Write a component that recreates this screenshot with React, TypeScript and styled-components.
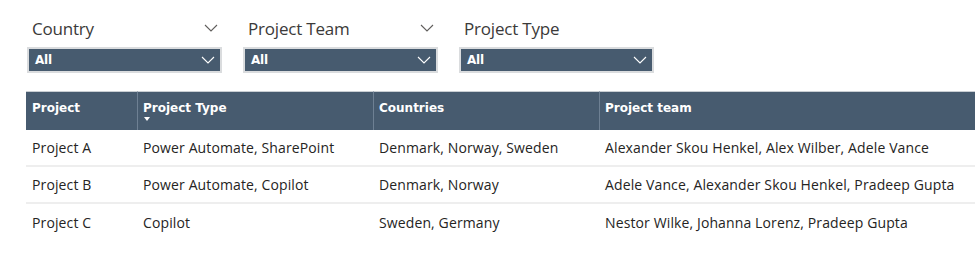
import React from "react";
import styled, { createGlobalStyle } from "styled-components";

const GlobalStyle = createGlobalStyle`
  html, body {
    margin: 0;
    padding: 0;
    background: #ffffff;
  }
  body {
    font-family: "Segoe UI", "Open Sans", "Noto Sans", sans-serif;
    overflow: hidden;
  }
`;

const slate = "#475b6f";

type Row = { project: string; type: string; countries: string; team: string };

const rows: Row[] = [
  {
    project: "Project A",
    type: "Power Automate, SharePoint",
    countries: "Denmark, Norway, Sweden",
    team: "Alexander Skou Henkel, Alex Wilber, Adele Vance",
  },
  {
    project: "Project B",
    type: "Power Automate, Copilot",
    countries: "Denmark, Norway",
    team: "Adele Vance, Alexander Skou Henkel, Pradeep Gupta",
  },
  {
    project: "Project C",
    type: "Copilot",
    countries: "Sweden, Germany",
    team: "Nestor Wilke, Johanna Lorenz, Pradeep Gupta",
  },
];

const Page = styled.div`
  width: 975px;
  height: 259px;
  overflow: hidden;
`;

const SlicerBar = styled.div`
  display: flex;
  gap: 21px;
  padding: 13px 0 0 27px;
`;

const Slicer = styled.div`
  width: 195px;
  display: flex;
  flex-direction: column;
`;

const SlicerHead = styled.div`
  height: 30px;
  display: flex;
  align-items: center;
  justify-content: space-between;
  padding: 0 4px 0 5px;
`;

const SlicerLabel = styled.span`
  font-size: 17px;
  color: #3b3a39;
  font-family: "Segoe UI", "Open Sans", sans-serif;
  letter-spacing: -0.2px;
`;

const DropBox = styled.div`
  margin-top: 4px;
  height: 26px;
  box-sizing: border-box;
  border: 2px solid #dadcde;
  background: ${slate};
  display: flex;
  align-items: center;
  justify-content: space-between;
  padding: 0 5px 0 6px;
`;

const DropValue = styled.span`
  color: #ffffff;
  font-family: "DejaVu Sans", sans-serif;
  font-weight: bold;
  font-size: 12px;
  letter-spacing: -0.2px;
`;

const Chevron = ({ color }: { color: string }) => (
  <svg width="14" height="8" viewBox="0 0 14 8" aria-hidden>
    <path d="M1 1 L7 7 L13 1" fill="none" stroke={color} strokeWidth="1.1" />
  </svg>
);

const Table = styled.div`
  margin: 18px 0 0 26px;
  display: grid;
  grid-template-columns: 111px 236px 226px 1fr;
`;

const HeadCell = styled.div<{ $first?: boolean }>`
  height: 39px;
  box-sizing: border-box;
  background: ${slate};
  border-top: 1px solid #c9ced3;
  border-left: ${({ $first }) => ($first ? "none" : "1px solid #6e8093")};
  padding: 9px 6px 0 ${({ $first }) => ($first ? "6px" : "5px")};
  color: #ffffff;
  font-family: "DejaVu Sans", sans-serif;
  font-weight: bold;
  font-size: 12px;
  letter-spacing: 0;
  line-height: 15px;
`;

const SortMark = styled.div`
  width: 0;
  height: 0;
  margin: 1px 0 0 1px;
  border-left: 3.5px solid transparent;
  border-right: 3.5px solid transparent;
  border-top: 4px solid #ffffff;
`;

const Cell = styled.div<{ $last?: boolean }>`
  height: 37px;
  box-sizing: border-box;
  display: flex;
  align-items: center;
  padding: 0 6px;
  border-bottom: ${({ $last }) => ($last ? "none" : "2px solid #eeeeee")};
  font-size: 14px;
  color: #252423;
  white-space: nowrap;
  letter-spacing: 0.12px;
`;

export default function App() {
  const slicers = [
    { label: "Country", collapse: true },
    { label: "Project Team", collapse: true },
    { label: "Project Type", collapse: false },
  ];
  return (
    <Page>
      <GlobalStyle />
      <SlicerBar>
        {slicers.map((s) => (
          <Slicer key={s.label}>
            <SlicerHead>
              <SlicerLabel>{s.label}</SlicerLabel>
              {s.collapse ? <Chevron color="#605e5c" /> : null}
            </SlicerHead>
            <DropBox>
              <DropValue>All</DropValue>
              <Chevron color="#ffffff" />
            </DropBox>
          </Slicer>
        ))}
      </SlicerBar>
      <Table>
        <HeadCell $first>Project</HeadCell>
        <HeadCell>
          Project Type
          <SortMark />
        </HeadCell>
        <HeadCell>Countries</HeadCell>
        <HeadCell>Project team</HeadCell>
        {rows.map((r, i) => {
          const last = i === rows.length - 1;
          return (
            <React.Fragment key={r.project}>
              <Cell $last={last}>{r.project}</Cell>
              <Cell $last={last}>{r.type}</Cell>
              <Cell $last={last}>{r.countries}</Cell>
              <Cell $last={last}>{r.team}</Cell>
            </React.Fragment>
          );
        })}
      </Table>
    </Page>
  );
}
